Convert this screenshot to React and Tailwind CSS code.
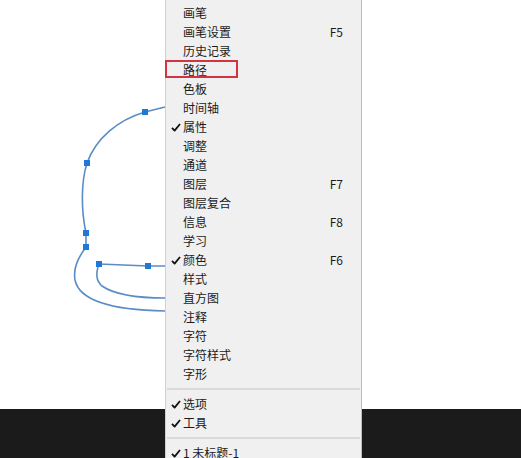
const items = [
  { label: '画笔' },
  { label: '画笔设置', key: 'F5' },
  { label: '历史记录' },
  { label: '路径', boxed: true },
  { label: '色板' },
  { label: '时间轴' },
  { label: '属性', checked: true },
  { label: '调整' },
  { label: '通道' },
  { label: '图层', key: 'F7' },
  { label: '图层复合' },
  { label: '信息', key: 'F8' },
  { label: '学习' },
  { label: '颜色', key: 'F6', checked: true },
  { label: '样式' },
  { label: '直方图' },
  { label: '注释' },
  { label: '字符' },
  { label: '字符样式' },
  { label: '字形' },
]

const Check = () => (
  <svg width="10" height="9" viewBox="0 0 10 9" className="block">
    <path d="M1 4.8 L3.6 7.6 L9 1" fill="none" stroke="#111" strokeWidth="1.8" strokeLinejoin="round" />
  </svg>
)

const MenuRow = ({ label, shortcut, checked, boxed }) => (
  <div className="relative flex h-[19px] items-center pr-[18px]">
    <div className="flex w-[17px] shrink-0 items-center justify-center pl-[2px]">
      {checked && <Check />}
    </div>
    <span className="flex-1 text-[12px] leading-none text-[#1b1b1b]">{label}</span>
    {shortcut && <span className="text-[12px] leading-none text-[#1b1b1b]">{shortcut}</span>}
    {boxed && (
      <div className="absolute left-[-1px] top-[-1px] h-[18px] w-[73px] border-2 border-[#d2353f]" />
    )}
  </div>
)

const Separator = () => (
  <div className="flex h-[11px] items-center px-[1px]">
    <div className="h-[2px] w-full bg-[#dadada]" />
  </div>
)

const Anchor = ({ x, y }) => <rect x={x - 3} y={y - 3} width="6" height="6" fill="#1f78d4" />

const PathCanvas = () => (
  <svg width="521" height="409" className="block">
    <g fill="none" stroke="#5a8cc6" strokeWidth="1.6">
      <path d="M165 107 L145 112 C118 120 96 138 87 163 C81 182 81 210 86 233 L86 247" />
      <path d="M86 247 C78 258 73 268 75 280 C79 300 110 310 165 311" />
      <path d="M99 264 L148 266 L165 266" />
      <path d="M99 264 C96 272 95 280 102 286 C115 295 140 298 165 298" />
    </g>
    <Anchor x={145} y={112} />
    <Anchor x={87} y={163} />
    <Anchor x={86} y={233} />
    <Anchor x={86} y={247} />
    <Anchor x={99} y={264} />
    <Anchor x={148} y={266} />
  </svg>
)

export default function App() {
  return (
    <div className="relative flex h-[458px] w-[521px] flex-col overflow-hidden bg-white font-['Noto_Sans_CJK_SC','Noto_Sans',sans-serif]">
      <div className="h-[409px] bg-white">
        <PathCanvas />
      </div>
      <div className="flex-1 bg-[#1b1b1b]" />

      <div className="absolute left-[165px] top-0 w-[197px] border-l border-r border-l-[#d0d0d0] border-r-[#bdbdbd] bg-[#f0f0f0] pt-[3.5px]">
        {items.map((it) => (
          <MenuRow key={it.label} label={it.label} shortcut={it.key} checked={it.checked} boxed={it.boxed} />
        ))}
        <Separator />
        <MenuRow label="选项" checked />
        <MenuRow label="工具" checked />
        <Separator />
        <MenuRow label="1 未标题-1" checked />
      </div>
    </div>
  )
}
